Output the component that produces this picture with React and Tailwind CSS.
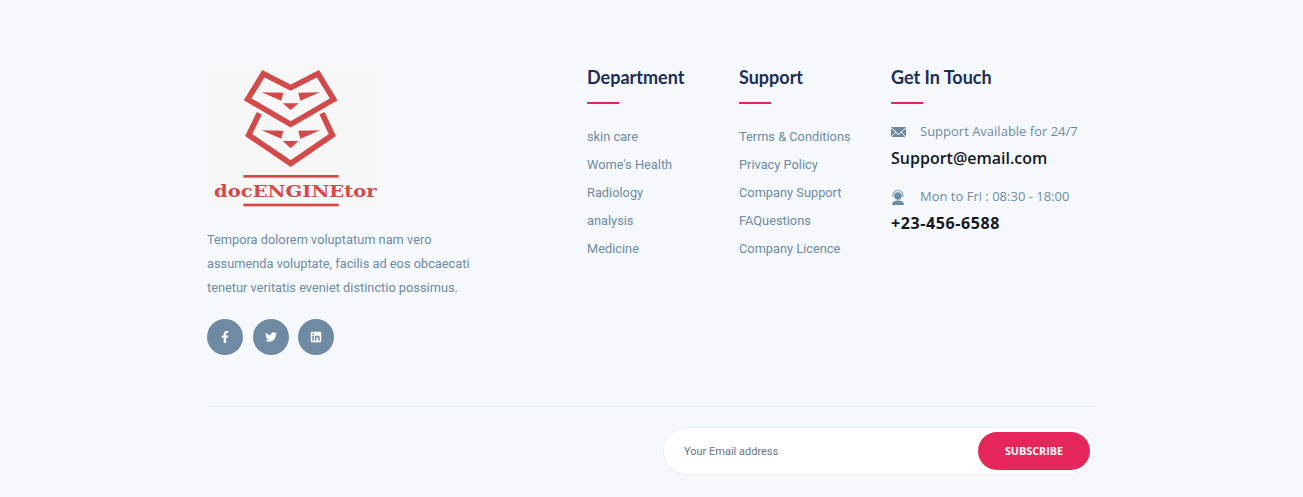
import React from "react";
import { FaFacebookF, FaTwitter, FaLinkedin } from "react-icons/fa";

const department = ["skin care", "Wome's Health", "Radiology", "analysis", "Medicine"];
const support = ["Terms & Conditions", "Privacy Policy", "Company Support", "FAQuestions", "Company Licence"];

function Logo() {
  return (
    <svg viewBox="21 15 528 435" className="block w-[176px] h-[145px] bg-[#f8f7f7]">
      <g fill="none" stroke="#d24a4a" strokeWidth="17" strokeLinejoin="miter">
        <path d="M190 41 L272 83 L354 41 L401 118 L272 193 L143 118 Z" />
        <path d="M178 160 L146 225 L272 311 L397 225 L366 160" />
      </g>
      <g fill="#d24a4a">
        <path d="M185 97 L250 98 L244 122 Z" />
        <path d="M360 97 L295 98 L301 122 Z" />
        <path d="M248 130 L296 130 L272 150 Z" />
        <path d="M185 211 L250 212 L244 236 Z" />
        <path d="M360 211 L295 212 L301 236 Z" />
        <path d="M248 243 L296 243 L272 265 Z" />
        <rect x="130" y="345" width="286" height="8" />
        <rect x="130" y="431" width="286" height="8" />
      </g>
      <text
        x="42"
        y="411"
        fill="#d24a4a"
        fontSize="50"
        fontWeight="700"
        fontFamily="'DejaVu Serif', serif"
        textLength="488"
        lengthAdjust="spacingAndGlyphs"
      >
        docENGINEtor
      </text>
    </svg>
  );
}

function ColumnTitle({ children }) {
  return (
    <div>
      <h4 className="h-[24px] leading-[24px] text-[18px] font-bold text-[#1e2d55] font-['Lato',sans-serif]">
        {children}
      </h4>
      <div className="mt-[13px] w-[32px] h-[2px] bg-[#e5265a]" />
    </div>
  );
}

function LinkColumn({ title, links }) {
  return (
    <div className="w-[152px]">
      <ColumnTitle>{title}</ColumnTitle>
      <ul className="mt-[19px]">
        {links.map((link) => (
          <li key={link} className="h-[28px] leading-[28px] text-[12.8px] text-[#6f8ba4]">
            {link}
          </li>
        ))}
      </ul>
    </div>
  );
}

function Social({ children }) {
  return (
    <a href="#" className="flex items-center justify-center w-[36px] h-[36px] rounded-full bg-[#6f8ba4] text-white text-[12px]">
      {children}
    </a>
  );
}

export default function App() {
  return (
    <div className="min-h-[497px] bg-[#f5f9fc] font-['Roboto',sans-serif]">
      <div className="w-[888px] ml-[207px] pt-[65px]">
        <div className="flex h-[342px] border-b border-[#e3eaef]">
          <div className="w-[380px]">
            <Logo />
            <p className="mt-[18px] w-[270px] text-[12.8px] leading-[24px] text-[#6f8ba4]">
              Tempora dolorem voluptatum nam vero assumenda voluptate, facilis ad eos obcaecati tenetur veritatis eveniet distinctio possimus.
            </p>
            <div className="mt-[19px] flex gap-[9.5px]">
              <Social><FaFacebookF /></Social>
              <Social><FaTwitter /></Social>
              <Social><FaLinkedin /></Social>
            </div>
          </div>
          <LinkColumn title="Department" links={department} />
          <LinkColumn title="Support" links={support} />
          <div className="w-[204px]">
            <ColumnTitle>Get In Touch</ColumnTitle>
            <div className="mt-[16px] flex items-center h-[24px] text-[13px] text-[#6f8ba4] font-['Open_Sans',sans-serif]">
              <svg viewBox="0 0 15 10" className="w-[15px] h-[10px] mr-[14px]">
                <rect width="15" height="10" fill="#6f8ba4" />
                <path d="M0 1 L5 5 M15 1 L10 5 M0 10 L5 5 L7.5 8 L10 5 L15 10" fill="none" stroke="#f5f9fc" strokeWidth="1" />
              </svg>
              Support Available for 24/7
            </div>
            <div className="mt-[2px] h-[24px] leading-[24px] text-[16px] font-semibold text-[#14181f] font-['Open_Sans',sans-serif]">
              Support@email.com
            </div>
            <div className="mt-[15px] flex items-center h-[24px] text-[13px] text-[#6f8ba4] font-['Open_Sans',sans-serif]">
              <svg viewBox="0 0 14 15" className="w-[14px] h-[15px] mr-[15px]">
                <path d="M2 7 V5.5 A5 5 0 0 1 12 5.5 V7" fill="none" stroke="#8fa6ba" strokeWidth="1.2" />
                <circle cx="7" cy="6" r="3.8" fill="#6f8ba4" />
                <path d="M1 15 C1 11.5 4 10.5 7 10.5 C10 10.5 13 11.5 13 15 Z" fill="#6f8ba4" />
              </svg>
              Mon to Fri : 08:30 - 18:00
            </div>
            <div className="mt-[2px] h-[24px] leading-[24px] text-[16px] font-bold tracking-[0.6px] text-[#14181f] font-['Open_Sans',sans-serif]">
              +23-456-6588
            </div>
          </div>
        </div>
        <div className="flex justify-end pt-[20px] pr-[1px]">
          <div className="flex items-center justify-between w-[431px] h-[48px] pl-[20px] pr-[3px] bg-white rounded-full border border-[#e9eff3]">
            <input
              placeholder="Your Email address"
              className="flex-1 pt-[2px] outline-none text-[11px] text-[#6c757d] placeholder:text-[#6c757d]"
            />
            <button className="w-[112px] h-[38px] rounded-full bg-[#e5265a] text-white text-[10.8px] font-bold font-['Open_Sans',sans-serif]">
              SUBSCRIBE
            </button>
          </div>
        </div>
      </div>
    </div>
  );
}
